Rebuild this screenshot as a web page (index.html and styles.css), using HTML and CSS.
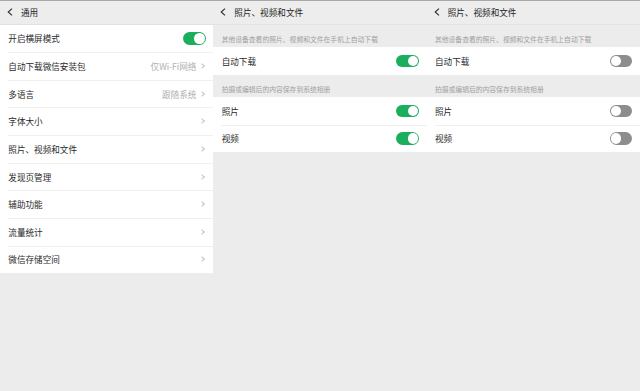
FILE: index.html
```html
<!DOCTYPE html>
<html lang="zh-CN">
<head>
    <meta charset="UTF-8">
    <meta name="viewport" content="width=device-width, initial-scale=1.0">
    <title>通用设置</title>
    <link rel="stylesheet" href="styles.css">
</head>
<body>

    <div class="panel">
        <div class="nav-bar">
            <svg class="back" viewBox="0 0 6 8"><path d="M5 0.6 L1.2 4 L5 7.4"/></svg>
            <span class="nav-title">通用</span>
        </div>
        <div class="list">
            <div class="row"><span class="label">开启横屏模式</span><span class="switch on"></span></div>
            <div class="row"><span class="label">自动下载微信安装包</span><span class="value">仅Wi-Fi网络</span><span class="arrow"></span></div>
            <div class="row"><span class="label">多语言</span><span class="value">跟随系统</span><span class="arrow"></span></div>
            <div class="row"><span class="label">字体大小</span><span class="arrow"></span></div>
            <div class="row"><span class="label">照片、视频和文件</span><span class="arrow"></span></div>
            <div class="row"><span class="label">发现页管理</span><span class="arrow"></span></div>
            <div class="row"><span class="label">辅助功能</span><span class="arrow"></span></div>
            <div class="row"><span class="label">流量统计</span><span class="arrow"></span></div>
            <div class="row"><span class="label">微信存储空间</span><span class="arrow"></span></div>
        </div>
    </div>

    <div class="panel">
        <div class="nav-bar">
            <svg class="back" viewBox="0 0 6 8"><path d="M5 0.6 L1.2 4 L5 7.4"/></svg>
            <span class="nav-title">照片、视频和文件</span>
        </div>
        <div class="section-title">其他设备查看的照片、视频和文件在手机上自动下载</div>
        <div class="list">
            <div class="row short"><span class="label">自动下载</span><span class="switch on"></span></div>
        </div>
        <div class="section-title">拍摄或编辑后的内容保存到系统相册</div>
        <div class="list">
            <div class="row short"><span class="label">照片</span><span class="switch on"></span></div>
            <div class="row short"><span class="label">视频</span><span class="switch on"></span></div>
        </div>
    </div>

    <div class="panel">
        <div class="nav-bar">
            <svg class="back" viewBox="0 0 6 8"><path d="M5 0.6 L1.2 4 L5 7.4"/></svg>
            <span class="nav-title">照片、视频和文件</span>
        </div>
        <div class="section-title">其他设备查看的照片、视频和文件在手机上自动下载</div>
        <div class="list">
            <div class="row short"><span class="label">自动下载</span><span class="switch"></span></div>
        </div>
        <div class="section-title">拍摄或编辑后的内容保存到系统相册</div>
        <div class="list">
            <div class="row short"><span class="label">照片</span><span class="switch"></span></div>
            <div class="row short"><span class="label">视频</span><span class="switch"></span></div>
        </div>
    </div>

</body>
</html>
```

FILE: styles.css
```css
* {
    box-sizing: border-box;
    margin: 0;
    padding: 0;
    font-family: 'Noto Sans CJK SC', 'Noto Sans', sans-serif;
}
body {
    display: flex;
    height: 100vh;
    background: #ececec;
    border-top: 1px solid #a9a9a9;
    color: #2a2a2a;
    font-size: 8.6px;
}
.panel {
    flex: 1;
    display: flex;
    flex-direction: column;
    min-width: 0;
}
.nav-bar {
    height: 23.5px;
    display: flex;
    align-items: center;
    padding-left: 7px;
    background: #ededed;
    border-bottom: 1px solid #e2e2e2;
}
.back {
    width: 6px;
    height: 8px;
    margin-right: 8px;
}
.back path {
    fill: none;
    stroke: #2b2b2b;
    stroke-width: 1.1;
}
.nav-title {
    font-size: 8.6px;
    color: #1e1e1e;
}
.list {
    background: #fff;
}
.row {
    height: 27.65px;
    display: flex;
    align-items: center;
    padding: 0 7.5px 0 8.3px;
    position: relative;
}
.row.short {
    height: 27.4px;
}
.row + .row::before {
    content: "";
    position: absolute;
    top: 0;
    left: 8px;
    right: 0;
    height: 1px;
    background: #efefef;
}
.label {
    flex: 1;
}
.value {
    color: #b0b0b0;
    margin-right: 4px;
}
.arrow {
    width: 4px;
    height: 4px;
    border-top: 1px solid #c4c4c4;
    border-right: 1px solid #c4c4c4;
    transform: rotate(45deg);
    margin-right: 1.5px;
}
.section-title {
    height: 22.7px;
    display: flex;
    align-items: flex-end;
    padding: 0 0 3.5px 8.3px;
    font-size: 6.8px;
    color: #a0a0a0;
}
.switch {
    width: 22.7px;
    height: 12.5px;
    border-radius: 7px;
    background: #8d8d8d;
    position: relative;
}
.switch::after {
    content: "";
    position: absolute;
    top: 1px;
    left: 1px;
    width: 10.5px;
    height: 10.5px;
    border-radius: 50%;
    background: #fff;
}
.switch.on {
    background: #1bae5c;
}
.switch.on::after {
    left: auto;
    right: 1px;
}
```
